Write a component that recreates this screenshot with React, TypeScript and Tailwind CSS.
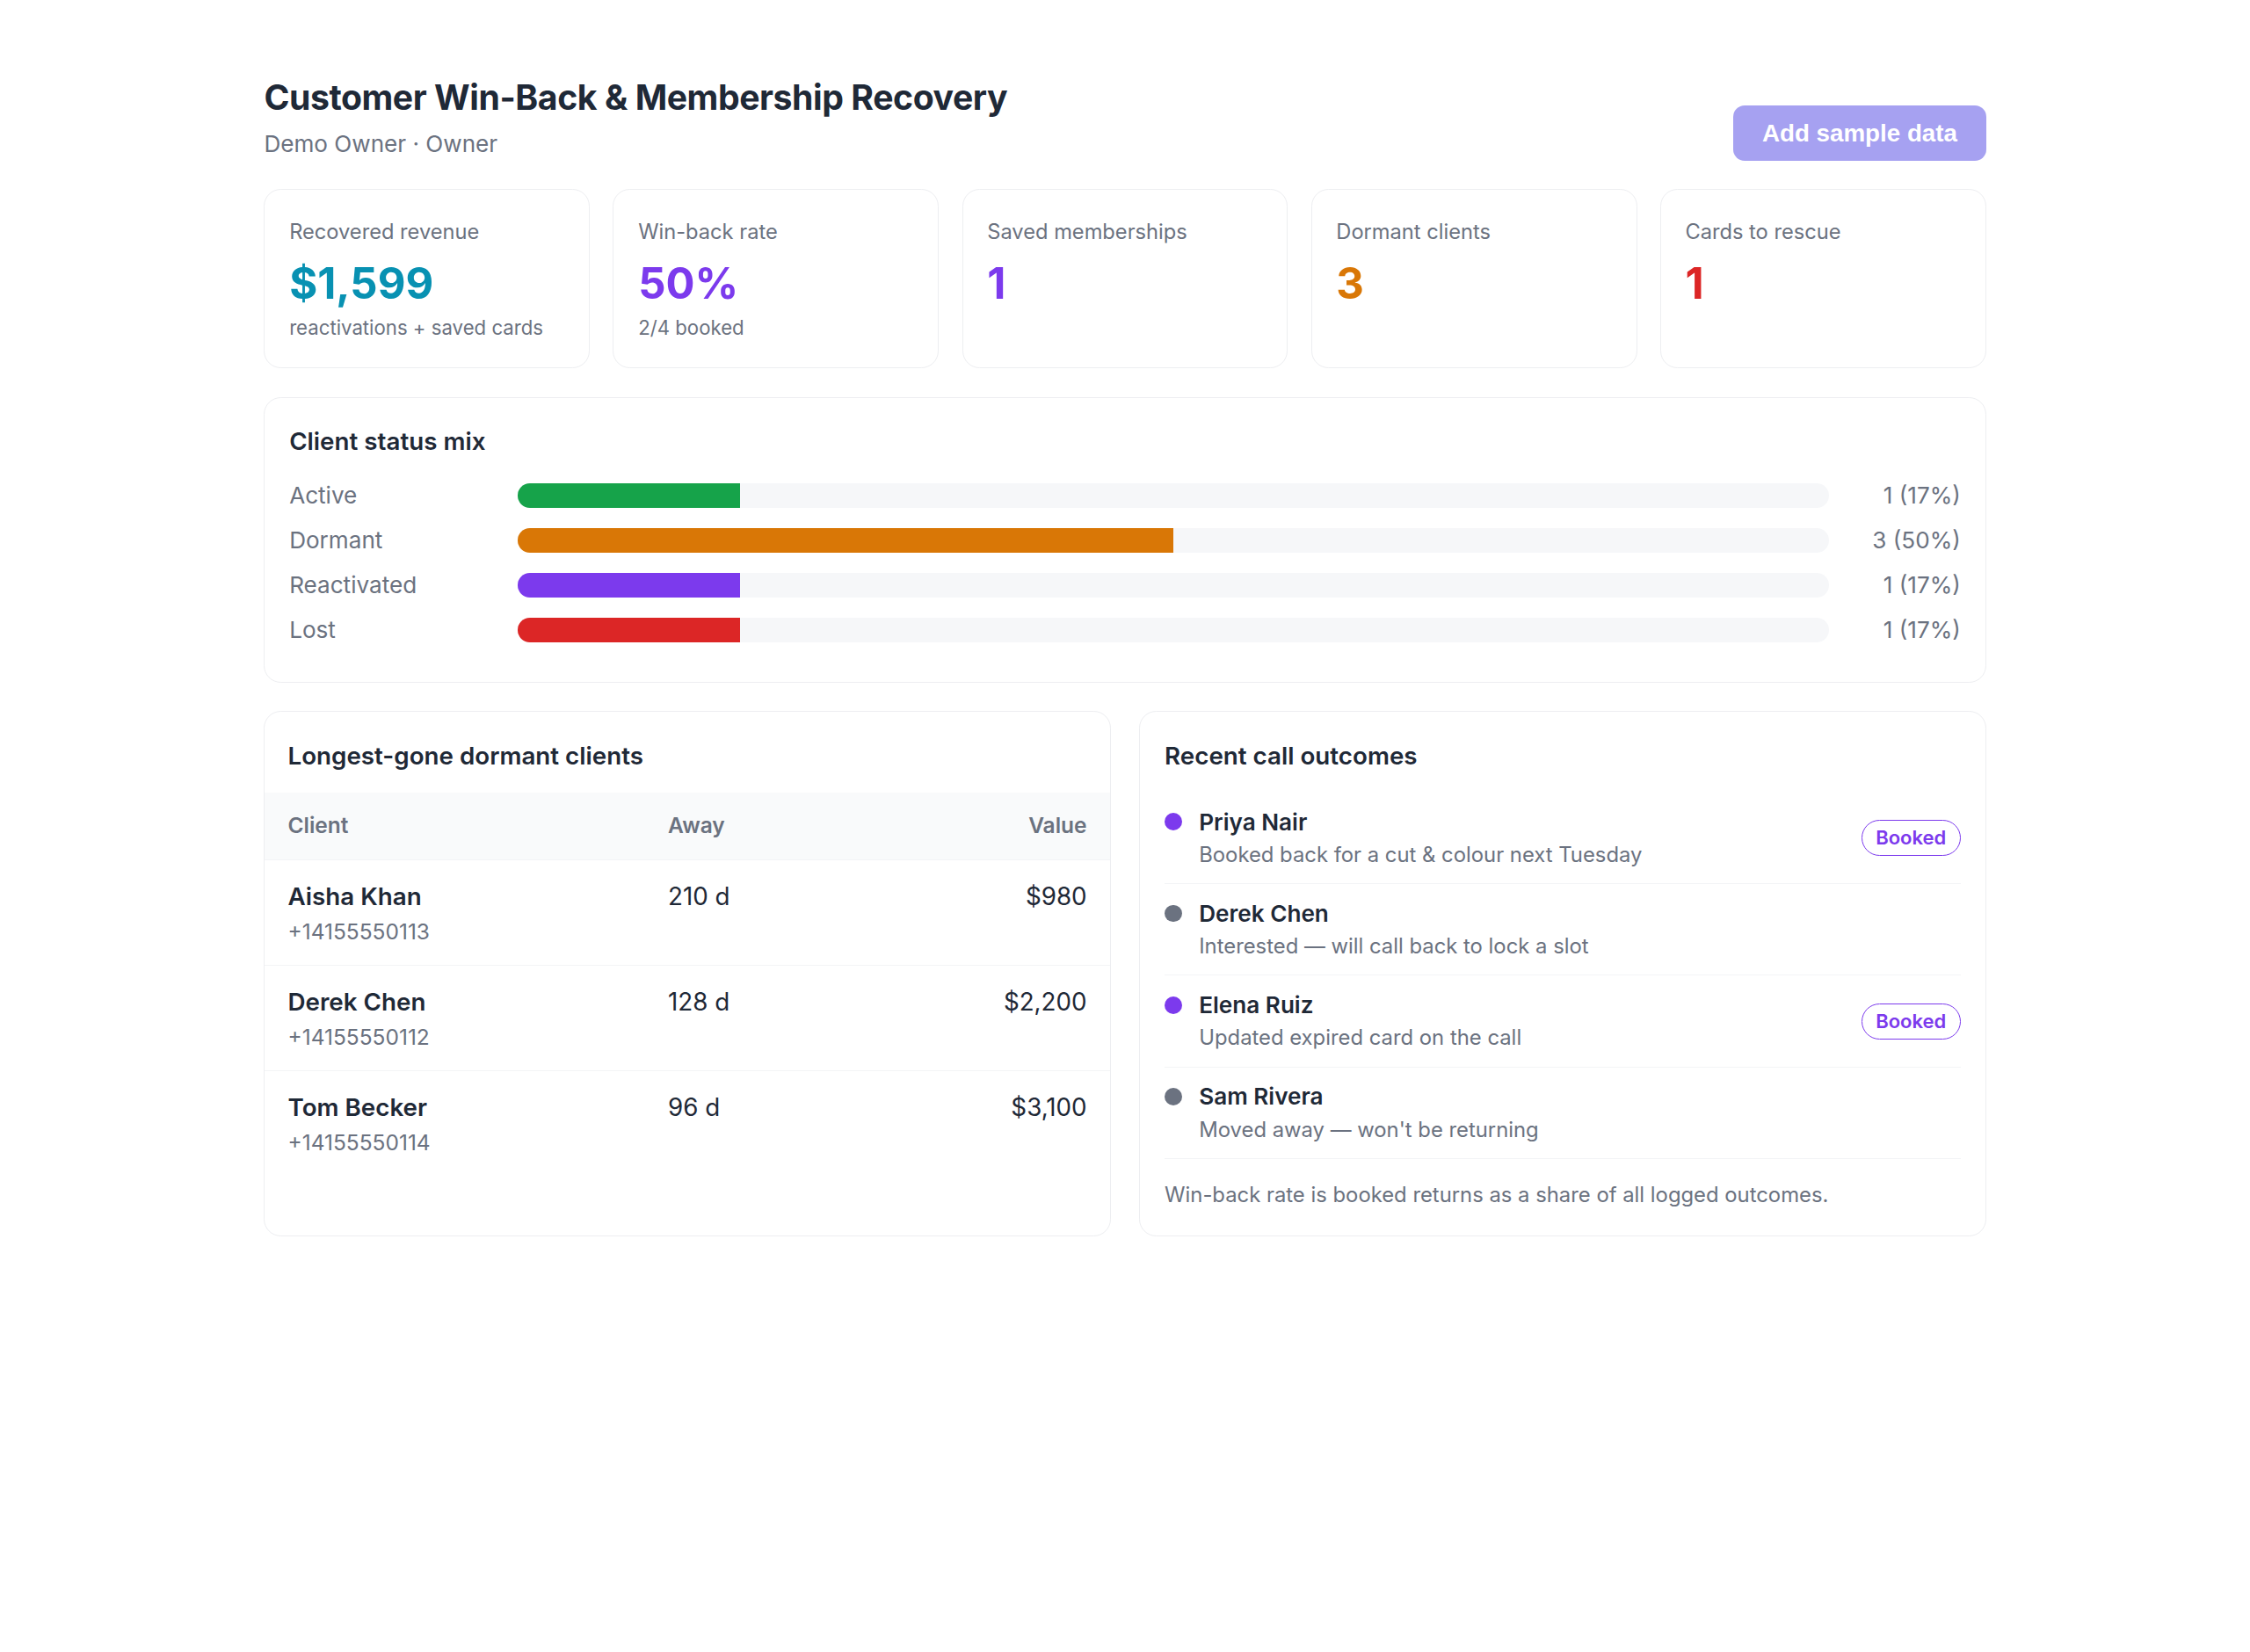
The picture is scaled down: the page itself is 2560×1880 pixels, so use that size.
import React from "react";

type Stat = { label: string; value: string; tone: string; sub?: string };

const stats: Stat[] = [
  { label: "Recovered revenue", value: "$1,599", tone: "text-[#0891b2]", sub: "reactivations + saved cards" },
  { label: "Win-back rate", value: "50%", tone: "text-[#7c3aed]", sub: "2/4 booked" },
  { label: "Saved memberships", value: "1", tone: "text-[#7c3aed]" },
  { label: "Dormant clients", value: "3", tone: "text-[#d97706]" },
  { label: "Cards to rescue", value: "1", tone: "text-[#dc2626]" },
];

const mix = [
  { label: "Active", count: 1, pct: 17, fill: "bg-[#16a34a]" },
  { label: "Dormant", count: 3, pct: 50, fill: "bg-[#d97706]" },
  { label: "Reactivated", count: 1, pct: 17, fill: "bg-[#7c3aed]" },
  { label: "Lost", count: 1, pct: 17, fill: "bg-[#dc2626]" },
];

const dormant = [
  { name: "Aisha Khan", phone: "+14155550113", away: "210 d", value: "$980" },
  { name: "Derek Chen", phone: "+14155550112", away: "128 d", value: "$2,200" },
  { name: "Tom Becker", phone: "+14155550114", away: "96 d", value: "$3,100" },
];

const calls = [
  { name: "Priya Nair", note: "Booked back for a cut & colour next Tuesday", booked: true },
  { name: "Derek Chen", note: "Interested — will call back to lock a slot", booked: false },
  { name: "Elena Ruiz", note: "Updated expired card on the call", booked: true },
  { name: "Sam Rivera", note: "Moved away — won't be returning", booked: false },
];

function StatCard({ s }: { s: Stat }) {
  return (
    <div className="rounded-xl border border-[#edeef1] bg-white px-[17px] pb-[17px] pt-[18px]">
      <div className="text-[14.5px] leading-[22.5px] text-[#6b7280]">{s.label}</div>
      <div className={`mt-[7px] text-[30px] font-bold leading-9 ${s.tone}`}>{s.value}</div>
      {s.sub && <div className="mt-0.5 text-[13.6px] leading-[21px] text-[#6b7280]">{s.sub}</div>}
    </div>
  );
}

export default function App() {
  return (
    <div className="bg-white font-[Inter,'Noto_Sans',sans-serif] text-[#1f2937] [zoom:1.6327]">
      <div className="mx-auto max-w-[1200px] pb-12 pt-[50px]">
        <header className="mb-5 flex items-end justify-between">
          <div>
            <h1 className="text-[24px] font-bold leading-9 tracking-[-0.011em] text-[#1f2937]">
              Customer Win-Back &amp; Membership Recovery
            </h1>
            <p className="mt-0.5 text-[16px] leading-6 text-[#6b7280]">Demo Owner · Owner</p>
          </div>
          <button
            type="button"
            className="rounded-lg bg-[#4f46e5] px-5 py-[6.5px] font-['Liberation_Sans',Arial,sans-serif] text-[17px] font-bold leading-[25.5px] text-white opacity-50"
          >
            Add sample data
          </button>
        </header>

        <div className="flex flex-col gap-5">
          <section className="grid grid-cols-5 gap-4">
            {stats.map((s) => (
              <StatCard key={s.label} s={s} />
            ))}
          </section>

          <section className="rounded-xl border border-[#edeef1] bg-white px-[17px] pb-4 pt-[17px]">
            <h2 className="text-[17px] font-semibold leading-[27px] text-[#1f2937]">Client status mix</h2>
            <div className="mt-3 flex flex-col gap-[7.3px] pb-2">
              {mix.map((m) => (
                <div key={m.label} className="flex items-center gap-4">
                  <div className="w-[143px] text-[16px] leading-6 text-[#6b7280]">{m.label}</div>
                  <div className="h-[17px] flex-1 overflow-hidden rounded-full bg-[#f6f7f9]">
                    <div className={`h-full ${m.fill}`} style={{ width: `${m.pct}%` }} />
                  </div>
                  <div className="w-[76px] text-right text-[16px] leading-6 text-[#6b7280]">
                    {m.count} ({m.pct}%)
                  </div>
                </div>
              ))}
            </div>
          </section>

          <section className="grid grid-cols-2 gap-5">
            <div className="overflow-hidden rounded-xl border border-[#edeef1] bg-white">
              <h2 className="px-4 pb-3 pt-[17px] text-[17px] font-semibold leading-[27px] text-[#1f2937]">
                Longest-gone dormant clients
              </h2>
              <table className="w-full border-collapse">
                <thead>
                  <tr className="border-b border-[#f3f4f6] bg-[#f9fafb] text-left text-[15px] leading-[22.5px] text-[#6b7280]">
                    <th className="w-[45%] px-4 py-3 font-semibold">Client</th>
                    <th className="px-4 py-3 font-semibold">Away</th>
                    <th className="px-4 py-3 text-right font-semibold">Value</th>
                  </tr>
                </thead>
                <tbody>
                  {dormant.map((d, i) => (
                    <tr key={d.name} className={i < dormant.length - 1 ? "border-b border-[#f3f4f6]" : ""}>
                      <td className="px-4 pb-3 pt-[13px] align-top">
                        <div className="text-[17px] font-semibold leading-[25.5px] text-[#1f2937]">{d.name}</div>
                        <div className="text-[15px] leading-[22.5px] text-[#6b7280]">{d.phone}</div>
                      </td>
                      <td className="px-4 pb-3 pt-[13px] align-top text-[17px] leading-[25.5px] text-[#1f2937]">
                        {d.away}
                      </td>
                      <td className="px-4 pb-3 pt-[13px] text-right align-top text-[17px] leading-[25.5px] text-[#1f2937]">
                        {d.value}
                      </td>
                    </tr>
                  ))}
                </tbody>
              </table>
            </div>

            <div className="rounded-xl border border-[#edeef1] bg-white p-[17px]">
              <h2 className="mb-3 text-[17px] font-semibold leading-[27px] text-[#1f2937]">Recent call outcomes</h2>
              <ul>
                {calls.map((c) => (
                  <li key={c.name} className="flex items-center justify-between border-b border-[#f3f4f6] py-[8.4px]">
                    <div className="flex items-start gap-3">
                      <span
                        className={`mt-1.5 h-3 w-3 shrink-0 rounded-full ${c.booked ? "bg-[#7c3aed]" : "bg-[#6b7280]"}`}
                      />
                      <div>
                        <div className="text-[16px] font-semibold leading-6 text-[#1f2937]">{c.name}</div>
                        <div className="text-[14.6px] leading-[22.5px] text-[#6b7280]">{c.note}</div>
                      </div>
                    </div>
                    {c.booked && (
                      <span className="rounded-full border border-[#7c3aed] px-[9.5px] py-0.5 text-[13.5px] font-semibold leading-5 text-[#7c3aed]">
                        Booked
                      </span>
                    )}
                  </li>
                ))}
              </ul>
              <p className="mt-3.5 text-[14.6px] leading-[22.5px] text-[#6b7280]">
                Win-back rate is booked returns as a share of all logged outcomes.
              </p>
            </div>
          </section>
        </div>
      </div>
    </div>
  );
}
